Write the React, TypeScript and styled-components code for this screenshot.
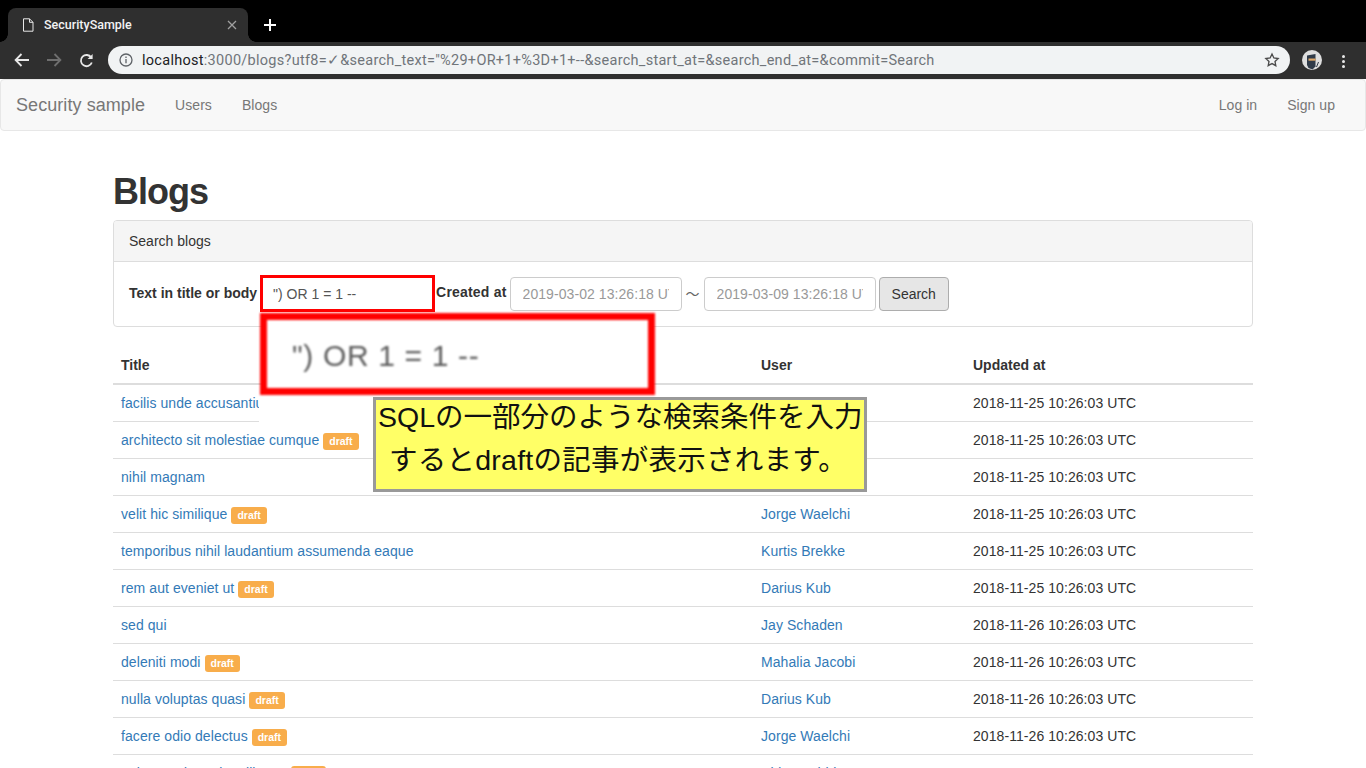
import React from 'react';
import styled, {createGlobalStyle} from 'styled-components';

type Row = {title: string; draft?: boolean; user?: string; updated: string};

const rows: Row[] = [
    {title: 'facilis unde accusantium', updated: '2018-11-25 10:26:03 UTC'},
    {title: 'architecto sit molestiae cumque', draft: true, updated: '2018-11-25 10:26:03 UTC'},
    {title: 'nihil magnam', updated: '2018-11-25 10:26:03 UTC'},
    {title: 'velit hic similique', draft: true, user: 'Jorge Waelchi', updated: '2018-11-25 10:26:03 UTC'},
    {title: 'temporibus nihil laudantium assumenda eaque', user: 'Kurtis Brekke', updated: '2018-11-25 10:26:03 UTC'},
    {title: 'rem aut eveniet ut', draft: true, user: 'Darius Kub', updated: '2018-11-25 10:26:03 UTC'},
    {title: 'sed qui', user: 'Jay Schaden', updated: '2018-11-26 10:26:03 UTC'},
    {title: 'deleniti modi', draft: true, user: 'Mahalia Jacobi', updated: '2018-11-26 10:26:03 UTC'},
    {title: 'nulla voluptas quasi', draft: true, user: 'Darius Kub', updated: '2018-11-26 10:26:03 UTC'},
    {title: 'facere odio delectus', draft: true, user: 'Jorge Waelchi', updated: '2018-11-26 10:26:03 UTC'},
    {title: 'enim quod aperiam illum a', draft: true, user: 'Alda Bashirian', updated: '2018-11-26 10:26:03 UTC'},
];

const GlobalStyle = createGlobalStyle`
    html, body {
        margin: 0;
        height: 768px;
        overflow: hidden;
        background: #fff;
    }
    * {
        box-sizing: border-box;
    }
`;

export default function App() {
    return (
        <Page>
            <GlobalStyle/>
            <TabStrip>
                <Tab>
                    <svg width="12" height="14" viewBox="0 0 12 14" fill="none" stroke="#e8e8e8" strokeWidth="1">
                        <path d="M1.5 .8h6l3.500 3.500v8.900h-9.500zM7.500 .8v3.500h3.500"/>
                    </svg>
                    <TabTitle>SecuritySample</TabTitle>
                    <svg width="10" height="10" viewBox="0 0 10 10" stroke="#a0a0a0" strokeWidth="1.3">
                        <path d="M1 1l8 8M9 1l-8 8"/>
                    </svg>
                </Tab>
                <NewTab>
                    <svg width="12" height="12" viewBox="0 0 12 12" stroke="#fff" strokeWidth="2">
                        <path d="M6 0v12M0 6h12"/>
                    </svg>
                </NewTab>
            </TabStrip>
            <Toolbar>
                <NavIcon>
                    <svg width="16" height="14" viewBox="0 0 16 14" fill="none" stroke="#e8e8e8" strokeWidth="1.8">
                        <path d="M15 7H2M7.500 1L1.600 7l5.900 6"/>
                    </svg>
                </NavIcon>
                <NavIcon>
                    <svg width="16" height="14" viewBox="0 0 16 14" fill="none" stroke="#6f6f6f" strokeWidth="1.8">
                        <path d="M1 7h13M8.500 1l5.900 6-5.900 6"/>
                    </svg>
                </NavIcon>
                <NavIcon>
                    <svg width="15" height="15" viewBox="0 0 15 15" fill="none" stroke="#e8e8e8" strokeWidth="1.8">
                        <path d="M12.800 9.500a5.600 5.600 0 1 1-.6-5"/>
                        <path d="M13.600 1v5h-5z" fill="#e8e8e8" stroke="none"/>
                    </svg>
                </NavIcon>
                <Omnibox>
                    <svg width="14" height="14" viewBox="0 0 14 14" fill="none" stroke="#5f6368" strokeWidth="1.3">
                        <circle cx="7" cy="7" r="6"/>
                        <path d="M7 6v4.200M7 3.600v1.300"/>
                    </svg>
                    <Url><UrlHost>localhost</UrlHost>:3000/blogs?utf8=✓&amp;search_text="%29+OR+1+%3D+1+--&amp;search_start_at=&amp;search_end_at=&amp;commit=Search</Url>
                    <svg width="16" height="16" viewBox="0 0 24 24" fill="none" stroke="#4a4a4a" strokeWidth="2">
                        <path d="M12 3l2.800 5.900 6.400.8-4.700 4.400 1.200 6.400-5.700-3.100-5.700 3.100 1.200-6.400-4.700-4.400 6.400-.8z"/>
                    </svg>
                </Omnibox>
                <Avatar>
                    <svg width="20" height="20" viewBox="0 0 20 20">
                        <circle cx="10" cy="10" r="10" fill="#dedede"/>
                        <path d="M5 5.500l8.500-1.500v12.500l-3 3-4-1.500-1.500-3z" fill="#2f3a48"/>
                        <path d="M6.500 8.500h7v2.200h-7z" fill="#e0a868"/>
                        <path d="M16.500 12l-2 5" stroke="#2f3a48" strokeWidth="1"/>
                    </svg>
                </Avatar>
                <MenuDots><i/><i/><i/></MenuDots>
            </Toolbar>
            <Navbar>
                <Brand>Security sample</Brand>
                <NavLink>Users</NavLink>
                <NavLink>Blogs</NavLink>
                <NavSpacer/>
                <NavLink>Log in</NavLink>
                <NavLink>Sign up</NavLink>
            </Navbar>
            <Container>
                <Heading>Blogs</Heading>
                <Panel>
                    <PanelHeading>Search blogs</PanelHeading>
                    <PanelBody>
                        <FieldLabel>Text in title or body</FieldLabel>
                        <SearchInput readOnly defaultValue={'") OR 1 = 1 --'}/>
                        <CreatedLabel>Created at</CreatedLabel>
                        <DateInput readOnly placeholder="2019-03-02 13:26:18 UTC"/>
                        <Tilde>〜</Tilde>
                        <DateInput readOnly placeholder="2019-03-09 13:26:18 UTC"/>
                        <SearchButton>Search</SearchButton>
                    </PanelBody>
                    <Magnifier>") OR 1 = 1 --</Magnifier>
                    <MagnifierGap/>
                    <Note>
                        <NoteLine>SQLの一部分のような検索条件を入力</NoteLine>
                        <NoteLine>するとdraftの記事が表示されます。</NoteLine>
                    </Note>
                </Panel>
                <BlogTable>
                    <colgroup>
                        <col width="640"/>
                        <col width="212"/>
                        <col width="288"/>
                    </colgroup>
                    <thead>
                        <tr>
                            <HeadCell>Title</HeadCell>
                            <HeadCell>User</HeadCell>
                            <HeadCell>Updated at</HeadCell>
                        </tr>
                    </thead>
                    <tbody>
                        {rows.map((row, i) => (
                            <tr key={i}>
                                <Cell>
                                    <BlogLink>{row.title}</BlogLink>
                                    {row.draft ? <DraftLabel>draft</DraftLabel> : null}
                                </Cell>
                                <Cell><BlogLink>{row.user}</BlogLink></Cell>
                                <Cell>{row.updated}</Cell>
                            </tr>
                        ))}
                    </tbody>
                </BlogTable>
            </Container>
        </Page>
    );
}

const Page = styled.div`
    width: 1366px;
    height: 768px;
    overflow: hidden;
    font-family: "Liberation Sans", Arial, sans-serif;
    font-size: 14px;
    line-height: 20px;
    color: #333;
`;
const TabStrip = styled.div`
    height: 42px;
    background: #000;
    display: flex;
    align-items: flex-end;
    padding-left: 8px;
`;
const Tab = styled.div`
    position: relative;
    width: 240px;
    height: 34px;
    background: #2f2f2f;
    border-radius: 8px 8px 0 0;
    display: flex;
    align-items: center;
    padding: 0 11px 0 14px;
    gap: 10px;
    &::before, &::after {
        content: "";
        position: absolute;
        bottom: 0;
        width: 8px;
        height: 8px;
    }
    &::before {
        left: -8px;
        background: radial-gradient(circle at 0 0, #000 7.500px, #2f2f2f 8px);
    }
    &::after {
        right: -8px;
        background: radial-gradient(circle at 100% 0, #000 7.500px, #2f2f2f 8px);
    }
`;
const TabTitle = styled.div`
    flex: 1;
    font-family: Roboto, "Liberation Sans", sans-serif;
    font-size: 12.500px;
    font-weight: 500;
    color: #f2f2f2;
`;
const NewTab = styled.div`
    height: 34px;
    width: 44px;
    display: flex;
    align-items: center;
    justify-content: center;
`;
const Toolbar = styled.div`
    height: 37px;
    background: #2f2f2f;
    display: flex;
    align-items: flex-start;
    padding: 4px 0 0 6px;
`;
const NavIcon = styled.div`
    width: 32px;
    height: 28px;
    display: flex;
    align-items: center;
    justify-content: center;
`;
const Omnibox = styled.div`
    width: 1182px;
    height: 28px;
    margin-left: 6px;
    border-radius: 14px;
    background: #f1f3f4;
    display: flex;
    align-items: center;
    padding: 0 10px 0 11px;
`;
const Url = styled.div`
    flex: 1;
    margin: 1px 0 0 9px;
    font-family: Roboto, "Liberation Sans", sans-serif;
    font-size: 14.500px;
    letter-spacing: .28px;
    color: #70757a;
    white-space: nowrap;
`;
const UrlHost = styled.span`
    color: #202124;
`;
const Avatar = styled.div`
    width: 20px;
    height: 20px;
    margin: 4px 0 0 12px;
`;
const MenuDots = styled.div`
    display: grid;
    gap: 2px;
    margin: 9px 0 0 20px;
    i {
        display: block;
        width: 3px;
        height: 3px;
        border-radius: 50%;
        background: #e8e8e8;
    }
`;
const Navbar = styled.div`
    height: 52px;
    background: #f8f8f8;
    border: 1px solid #e7e7e7;
    border-radius: 4px;
    display: flex;
    align-items: center;
    padding: 0 15px;
    letter-spacing: .05px;
`;
const Brand = styled.div`
    font-size: 18px;
    color: #777;
    margin-right: 15px;
    letter-spacing: .07px;
`;
const NavLink = styled.div`
    color: #777;
    padding: 0 15px;
`;
const NavSpacer = styled.div`
    flex: 1;
`;
const Container = styled.div`
    width: 1140px;
    margin: 0 auto;
`;
const Heading = styled.h1`
    font-size: 36px;
    font-weight: 700;
    line-height: 40px;
    letter-spacing: -1px;
    margin: 41px 0 8px;
    color: #333;
`;
const Panel = styled.div`
    position: relative;
    height: 107px;
    margin-bottom: 20px;
    border: 1px solid #ddd;
    border-radius: 4px;
`;
const PanelHeading = styled.div`
    height: 41px;
    padding: 10px 15px;
    background: #f5f5f5;
    border-bottom: 1px solid #ddd;
    border-radius: 3px 3px 0 0;
`;
const PanelBody = styled.div`
    display: flex;
    align-items: flex-start;
    padding: 15px 15px 0;
`;
const FieldLabel = styled.div`
    font-weight: 700;
    margin: 6px 3px 0 0;
`;
const SearchInput = styled.input`
    width: 175px;
    height: 37px;
    margin-top: -2px;
    border: 3px solid #f00;
    padding: 6px 10px;
    outline: none;
    background: #fff;
    font: inherit;
    color: #555;
`;
const CreatedLabel = styled.div`
    font-weight: 700;
    letter-spacing: .2px;
    margin: 5px 3px 0 1px;
`;
const DateInput = styled.input`
    width: 172px;
    height: 34px;
    border: 1px solid #ccc;
    border-radius: 4px;
    padding: 6px 12px;
    outline: none;
    background: #fff;
    font: inherit;
    letter-spacing: .07px;
    &::placeholder {
        color: #999;
        opacity: 1;
    }
`;
const Tilde = styled.div`
    width: 22px;
    text-align: center;
    margin-top: 6px;
    font-family: "Noto Sans CJK JP", sans-serif;
    font-size: 14px;
    color: #666;
`;
const SearchButton = styled.div`
    height: 34px;
    margin-left: 3px;
    padding: 6px 12px;
    background: #e6e6e6;
    border: 1px solid #adadad;
    border-radius: 4px;
`;
const Magnifier = styled.div`
    position: absolute;
    left: 146px;
    top: 92px;
    width: 395px;
    height: 82px;
    background: #fff;
    border: 7px solid #f00;
    padding: 18px 0 0 25px;
    font-size: 30px;
    line-height: 36px;
    letter-spacing: .65px;
    color: #5c5c5c;
    filter: blur(1px);
    z-index: 2;
`;
const MagnifierGap = styled.div`
    position: absolute;
    left: 145px;
    top: 174px;
    width: 116px;
    height: 27px;
    background: #fff;
    z-index: 1;
`;
const Note = styled.div`
    position: absolute;
    left: 259px;
    top: 176px;
    width: 494px;
    height: 95px;
    background: #ffff66;
    border: 3px solid #999;
    z-index: 2;
    padding: 0 0 0 2px;
    font-family: "Liberation Sans", "Noto Sans CJK JP", sans-serif;
    color: #111;
`;
const NoteLine = styled.div`
    font-size: 28.500px;
    line-height: 42px;
    white-space: nowrap;
    position: relative;
    top: -4px;
    &:last-child {
        top: -3px;
        padding-left: 11px;
        letter-spacing: .25px;
    }
`;
const BlogTable = styled.table`
    width: 1140px;
    table-layout: fixed;
    border-collapse: collapse;
`;
const HeadCell = styled.th`
    height: 37px;
    padding: 8px;
    text-align: left;
    font-weight: 700;
    border-bottom: 2px solid #ddd;
`;
const Cell = styled.td`
    height: 37px;
    padding: 8px;
    border-bottom: 1px solid #ddd;
    white-space: nowrap;
    letter-spacing: .07px;
`;
const BlogLink = styled.span`
    color: #337ab7;
`;
const DraftLabel = styled.span`
    display: inline-block;
    margin-left: 4px;
    padding: 2px 6px;
    font-size: 10.500px;
    font-weight: 700;
    line-height: 13px;
    letter-spacing: 0;
    color: #fff;
    background: #f8ad4b;
    border-radius: 3px;
`;
